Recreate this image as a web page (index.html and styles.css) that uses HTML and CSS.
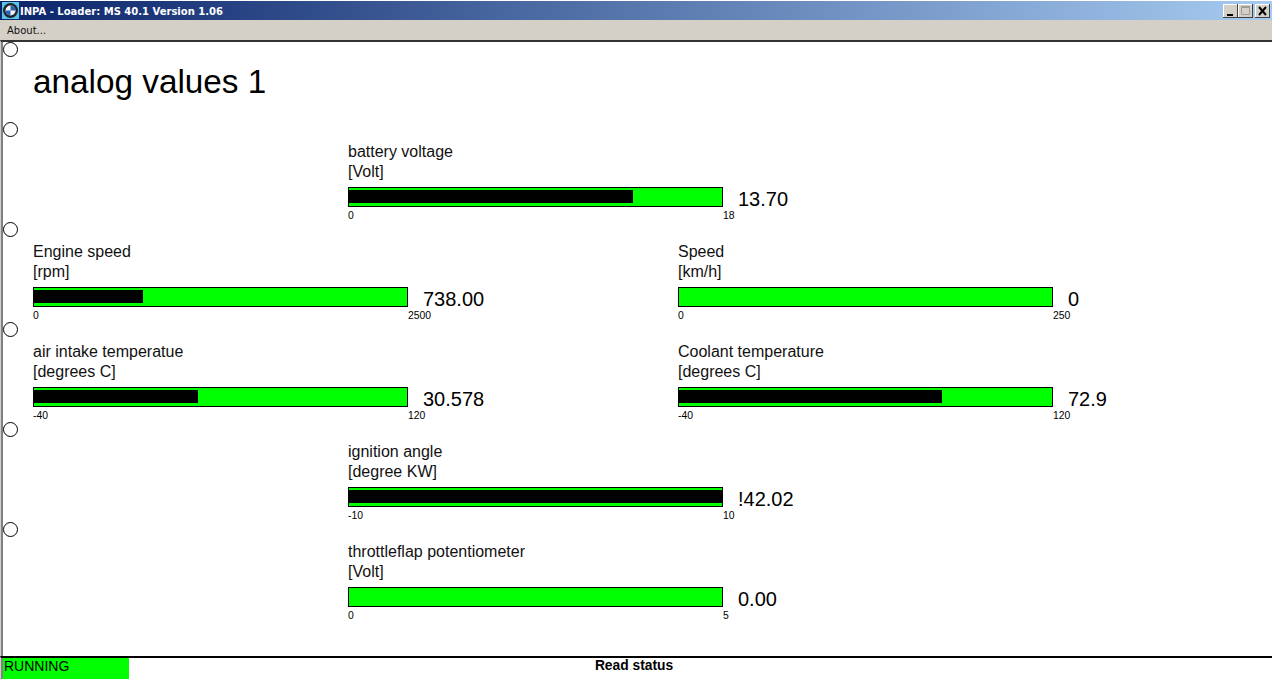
FILE: index.html
```html
<!DOCTYPE html>
<html lang="en">
<head>
    <meta charset="UTF-8">
    <title>INPA - Loader: MS 40.1 Version 1.06</title>
    <link rel="stylesheet" href="styles.css">
</head>
<body>
<div class="window">
    <div class="titlebar">
        <svg class="app-icon" width="17" height="17" viewBox="0 0 17 17">
            <rect width="17" height="17" fill="#58c4e8"/>
            <circle cx="8.5" cy="8.5" r="7.5" fill="#23232e"/>
            <circle cx="8.5" cy="8.5" r="5" fill="#f4f4f4"/>
            <path d="M8.5 8.5v-5a5 5 0 0 1 5 5zM8.5 8.5v5a5 5 0 0 1-5-5z" fill="#2a62b8"/>
        </svg>
        <span class="title-text">INPA - Loader: MS 40.1 Version 1.06</span>
        <div class="win-buttons">
            <div class="win-btn"><svg width="15" height="14" viewBox="0 0 15 14"><rect x="4" y="10" width="6" height="2" fill="#000"/></svg></div>
            <div class="win-btn"><svg width="15" height="14" viewBox="0 0 15 14"><path d="M3.5 2.5h8v8h-8zM3.5 3.5h8" fill="none" stroke="#a09c94"/></svg></div>
            <div class="win-btn win-btn-close"><svg width="15" height="14" viewBox="0 0 15 14"><path d="M4 3l7 8M11 3l-7 8" fill="none" stroke="#000" stroke-width="2"/></svg></div>
        </div>
    </div>
    <div class="menubar"><span class="menu-item">About...</span></div>

    <div class="screen">
        <div class="row row-head">
            <span class="dot"></span>
            <h1>analog values 1</h1>
        </div>

        <div class="row">
            <span class="dot"></span>
            <div class="gauge col-mid">
                <div class="gauge-label">battery voltage</div>
                <div class="gauge-unit">[Volt]</div>
                <div class="gauge-line">
                    <div class="bar"><div class="bar-fill" style="width: 284px"></div></div>
                    <div class="gauge-value">13.70</div>
                </div>
                <div class="scale"><span>0</span><span>18</span></div>
            </div>
        </div>

        <div class="row">
            <span class="dot"></span>
            <div class="gauge col-left">
                <div class="gauge-label">Engine speed</div>
                <div class="gauge-unit">[rpm]</div>
                <div class="gauge-line">
                    <div class="bar"><div class="bar-fill" style="width: 109px"></div></div>
                    <div class="gauge-value">738.00</div>
                </div>
                <div class="scale"><span>0</span><span>2500</span></div>
            </div>
            <div class="gauge col-right">
                <div class="gauge-label">Speed</div>
                <div class="gauge-unit">[km/h]</div>
                <div class="gauge-line">
                    <div class="bar"></div>
                    <div class="gauge-value">0</div>
                </div>
                <div class="scale"><span>0</span><span>250</span></div>
            </div>
        </div>

        <div class="row">
            <span class="dot"></span>
            <div class="gauge col-left">
                <div class="gauge-label">air intake temperatue</div>
                <div class="gauge-unit">[degrees C]</div>
                <div class="gauge-line">
                    <div class="bar"><div class="bar-fill" style="width: 164px"></div></div>
                    <div class="gauge-value">30.578</div>
                </div>
                <div class="scale"><span>-40</span><span>120</span></div>
            </div>
            <div class="gauge col-right">
                <div class="gauge-label">Coolant temperature</div>
                <div class="gauge-unit">[degrees C]</div>
                <div class="gauge-line">
                    <div class="bar"><div class="bar-fill" style="width: 263px"></div></div>
                    <div class="gauge-value">72.9</div>
                </div>
                <div class="scale"><span>-40</span><span>120</span></div>
            </div>
        </div>

        <div class="row">
            <span class="dot"></span>
            <div class="gauge col-mid">
                <div class="gauge-label">ignition angle</div>
                <div class="gauge-unit">[degree KW]</div>
                <div class="gauge-line">
                    <div class="bar"><div class="bar-fill" style="width: 373px"></div></div>
                    <div class="gauge-value">!42.02</div>
                </div>
                <div class="scale"><span>-10</span><span>10</span></div>
            </div>
        </div>

        <div class="row">
            <span class="dot"></span>
            <div class="gauge col-mid">
                <div class="gauge-label">throttleflap potentiometer</div>
                <div class="gauge-unit">[Volt]</div>
                <div class="gauge-line">
                    <div class="bar"></div>
                    <div class="gauge-value">0.00</div>
                </div>
                <div class="scale"><span>0</span><span>5</span></div>
            </div>
        </div>
    </div>

    <div class="statusbar">
        <div class="status-state">RUNNING</div>
        <div class="status-text">Read status</div>
    </div>
</div>
</body>
</html>
```

FILE: styles.css
```css
* {
    margin: 0;
    padding: 0;
    box-sizing: border-box;
}

html, body {
    height: 100%;
    overflow: hidden;
}

body {
    background-color: white;
    color: black;
    font-family: "Liberation Sans", Arial, sans-serif;
}

.window {
    display: flex;
    flex-direction: column;
    height: 679px;
}

/* Title bar */
.titlebar {
    display: flex;
    align-items: center;
    height: 19px;
    margin-top: 1px;
    padding-left: 2px;
    background: linear-gradient(to right, #0a246a, #a6caf0);
    flex: none;
}

.app-icon {
    flex: none;
}

.title-text {
    margin-left: 1px;
    padding-top: 1px;
    color: white;
    font-family: "DejaVu Sans", sans-serif;
    font-size: 10px;
    font-weight: bold;
    white-space: nowrap;
}

.win-buttons {
    display: flex;
    margin-left: auto;
    margin-right: 2px;
}

.win-btn {
    width: 15px;
    height: 14px;
    background-color: #d4d0c8;
    box-shadow: inset -1px -1px 0 #404040, inset 1px 1px 0 #fff;
}

.win-btn-close {
    margin-left: 2px;
}

.win-btn svg {
    display: block;
}

/* Menu */
.menubar {
    display: flex;
    align-items: center;
    height: 20px;
    padding-left: 7px;
    background-color: #d4d0c8;
    flex: none;
}

.menu-item {
    font-family: "DejaVu Sans", sans-serif;
    font-size: 10px;
    color: #111;
}

/* Main screen */
.screen {
    flex: 1;
    padding-left: 2px;
    border-top: 2px solid #333;
    border-left: 1px solid #d4d0c8;
    box-shadow: inset 2px 0 0 #808080;
    overflow: hidden;
}

.row {
    display: grid;
    grid-template-columns: 30px 315px 330px 1fr;
    height: 100px;
    position: relative;
}

.row-head {
    height: 80px;
}

.dot {
    position: absolute;
    left: 0;
    top: 0;
    width: 15px;
    height: 15px;
    border: 1px solid black;
    border-radius: 50%;
}

h1 {
    grid-column: 2 / 5;
    margin-top: 21px;
    font-size: 33.3px;
    font-weight: normal;
}

.gauge {
    padding-top: 20px;
}

.col-left {
    grid-column: 2;
}

.col-mid {
    grid-column: 3;
    grid-row: 1;
}

.col-right {
    grid-column: 4;
}

.gauge-label,
.gauge-unit {
    height: 20px;
    font-size: 16px;
    line-height: 20px;
    color: #111;
    white-space: nowrap;
}

.gauge-line {
    display: flex;
    align-items: flex-start;
    height: 20px;
    margin-top: 5px;
}

.bar {
    width: 375px;
    height: 20px;
    padding-top: 2px;
    border: 1px solid black;
    background-color: #00ff00;
    flex: none;
}

.bar-fill {
    height: 13px;
    background-color: black;
}

.gauge-value {
    margin-top: 2px;
    margin-left: 15px;
    font-size: 20px;
    line-height: 20px;
}

.scale {
    display: flex;
    justify-content: space-between;
    width: 375px;
    height: 12px;
    margin-top: 3px;
    font-size: 10.4px;
    line-height: 12px;
}

/* the max label starts where the bar ends */
.scale span:last-child {
    width: 0;
}

/* Status bar */
.statusbar {
    display: flex;
    height: 23px;
    padding-left: 2px;
    border-top: 2px solid black;
    border-left: 1px solid #d4d0c8;
    box-shadow: inset 2px 0 0 #808080;
    flex: none;
}

.status-state {
    width: 126px;
    padding-left: 1px;
    background-color: #00ff00;
    font-size: 14px;
    line-height: 16px;
}

.status-text {
    width: 1010px;
    font-size: 13.8px;
    font-weight: bold;
    line-height: 16px;
    text-align: center;
}
```
